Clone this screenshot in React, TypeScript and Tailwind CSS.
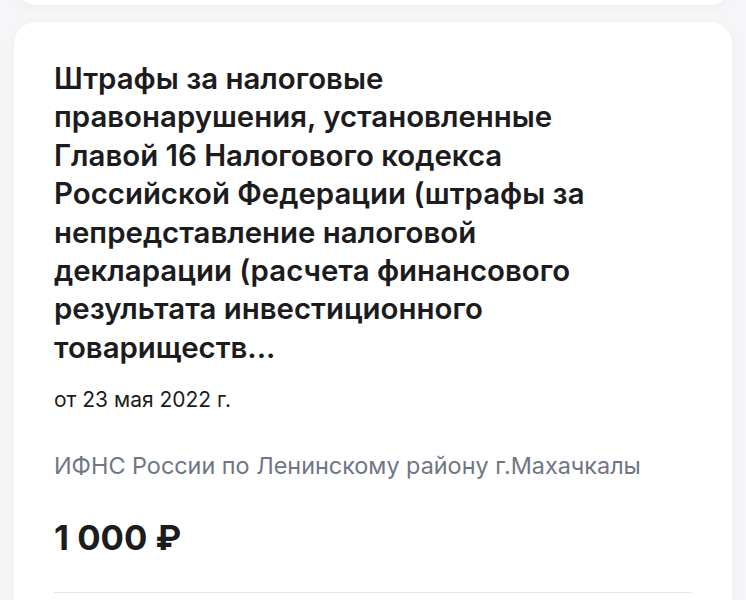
import React from 'react';

const font = { fontFamily: 'Inter, "Noto Sans", sans-serif' };

const App: React.FC = () => {
  return (
    <div className="w-[746px] h-[600px] overflow-hidden bg-[#f6f6f8]" style={font}>
      {/* Previous card (cut off) */}
      <div className="mx-[14px] -mt-[40px] h-[45px] rounded-b-[22px] bg-white shadow-[0_2px_12px_rgba(0,0,0,0.04)]"></div>

      {/* Fine card */}
      <div className="mx-[14px] mt-[17px] rounded-[22px] bg-white shadow-[0_2px_12px_rgba(0,0,0,0.04)] px-[40px] pt-[38px]">
        <h2 className="max-w-[560px] text-[29.4px] leading-[38.4px] font-semibold text-[#1c1c1e]">
          Штрафы за налоговые правонарушения, установленные Главой 16 Налогового кодекса Российской Федерации (штрафы за непредставление налоговой декларации (расчета финансового результата инвестиционного товариществ...
        </h2>
        <div className="mt-[19px] text-[21px] leading-[28px] text-[#1c1c1e]">от 23 мая 2022 г.</div>
        <div className="mt-[37px] text-[23.4px] leading-[30px] text-[#6f7685]">
          ИФНС России по Ленинскому району г.Махачкалы
        </div>
        <div className="mt-[36px] text-[34.7px] leading-[40px] font-bold text-[#1c1c1e]">1 000 ₽</div>
        <div className="mt-[35px] h-px bg-[#e5e5ea]"></div>
        <div className="h-[40px]"></div>
      </div>
    </div>
  );
};

export default App;
